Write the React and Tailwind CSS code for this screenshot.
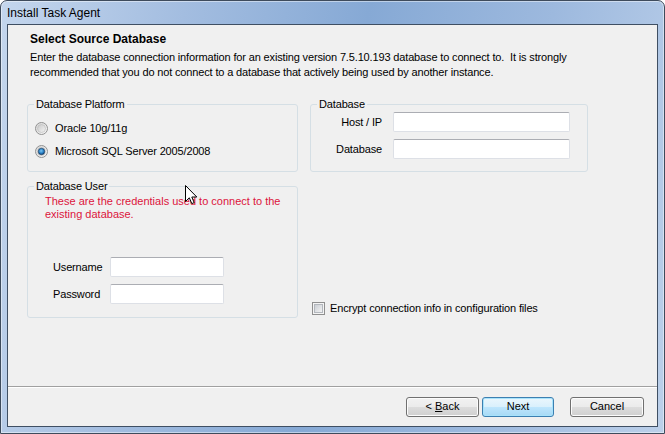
import React from 'react';

const FONT = { fontFamily: '"Liberation Sans", Arial, sans-serif' };

function Radio({ checked }) {
  return (
    <svg width="13" height="13" viewBox="0 0 13 13" className="shrink-0">
      <defs>
        <linearGradient id="rg-ring" x1="0" y1="0" x2="1" y2="1">
          <stop offset="0" stopColor="#d6d6d6" />
          <stop offset="1" stopColor="#f8f8f8" />
        </linearGradient>
        <linearGradient id="rg-in" x1="0" y1="0" x2="1" y2="1">
          <stop offset="0" stopColor="#c9c9c9" />
          <stop offset="1" stopColor="#f4f4f4" />
        </linearGradient>
        <radialGradient id="rg-dot" cx="0.45" cy="0.4" r="0.6">
          <stop offset="0" stopColor="#7cc6f2" />
          <stop offset="0.6" stopColor="#2a82c8" />
          <stop offset="1" stopColor="#0d3f73" />
        </radialGradient>
      </defs>
      <circle cx="6.5" cy="6.5" r="6" fill="url(#rg-ring)" stroke="#929292" />
      <circle cx="6.5" cy="6.5" r="4" fill="url(#rg-in)" stroke="#b9b9b9" strokeWidth="0.6" />
      {checked && <circle cx="6.5" cy="6.5" r="3.2" fill="url(#rg-dot)" stroke="#1a3d60" strokeWidth="0.6" />}
    </svg>
  );
}

function Checkbox() {
  return (
    <svg width="13" height="13" viewBox="0 0 13 13" className="shrink-0">
      <defs>
        <linearGradient id="cb-in" x1="0" y1="0" x2="1" y2="1">
          <stop offset="0" stopColor="#c8ccd2" />
          <stop offset="1" stopColor="#f5f5f5" />
        </linearGradient>
      </defs>
      <rect x="0.5" y="0.5" width="12" height="12" fill="#f4f4f4" stroke="#8f8f8f" />
      <rect x="2.5" y="2.5" width="8" height="8" fill="url(#cb-in)" stroke="#b3b7bd" />
    </svg>
  );
}

function TextBox({ className = '' }) {
  return (
    <div className={`h-[20px] bg-white rounded-[2px] border border-[#dde0e6] border-t-[#abadb3] ${className}`} />
  );
}

function Button({ children, primary, className }) {
  const skin = primary
    ? 'border-[#3c7fb1] bg-[linear-gradient(#eaf6fd_0%,#d9f0fc_50%,#bee6fd_50%,#a7d9f5_100%)] shadow-[inset_0_0_0_1px_#a8e3fb]'
    : 'border-[#707070] bg-[linear-gradient(#f2f2f2_0%,#ebebeb_50%,#dddddd_50%,#cfcfcf_100%)] shadow-[inset_0_0_0_1px_#fcfcfc]';
  return (
    <div className={`h-[20px] rounded-[3px] border flex items-center justify-center text-[11px] text-black ${skin} ${className}`}>
      <span className="whitespace-pre">{children}</span>
    </div>
  );
}

export default function App() {
  return (
    <div className="relative w-[665px] h-[434px] overflow-hidden bg-white" style={FONT}>
      <div className="w-full h-full flex flex-col rounded-t-[7px] border border-[#3e4b5c] px-[6px] pb-[6px]
        bg-[linear-gradient(100deg,#c4d6ed_0%,#a3bde0_25%,#86a9d5_50%,#9db9de_75%,#bcd0ea_100%)]
        shadow-[inset_0_0_0_1px_rgba(255,255,255,0.45)]">

        {/* Title bar */}
        <div className="h-[23px] flex items-center text-[12px] text-black pt-[1px]">
          Install Task Agent
        </div>

        {/* Client area */}
        <div className="flex-1 flex flex-col border border-[#3f4f63] bg-[#f0f0f0] tracking-[-0.15px]">
          <div className="flex-1 flex flex-col">

            {/* Header */}
            <div className="pt-[7px] pl-[22px]">
              <div className="text-[12px] leading-[15px] font-bold text-black tracking-normal">Select Source Database</div>
              <p className="mt-[3px] text-[11px] leading-[15px] text-black whitespace-pre-wrap">
                {'Enter the database connection information for an existing version 7.5.10.193 database to connect to.  It is strongly\nrecommended that you do not connect to a database that actively being used by another instance.'}
              </p>
            </div>

            {/* Groups */}
            <div className="mt-[18px] pl-[19px] flex gap-[12px] text-[11px] text-black">

              {/* Left column */}
              <div className="w-[271px] flex flex-col">
                <fieldset className="h-[74px] border border-[#d5dfe5] rounded-[3px] px-0">
                  <legend className="ml-[6px] px-[2px] leading-[13px]">Database Platform</legend>
                  <div className="flex flex-col pl-[7px] pt-[9px] gap-[6px]">
                    <div className="h-[17px] flex items-center gap-[7px]">
                      <Radio />
                      <span>Oracle 10g/11g</span>
                    </div>
                    <div className="h-[17px] flex items-center gap-[7px]">
                      <Radio checked />
                      <span>Microsoft SQL Server 2005/2008</span>
                    </div>
                  </div>
                </fieldset>

                <fieldset className="mt-[8px] h-[138px] border border-[#d5dfe5] rounded-[3px] px-0">
                  <legend className="ml-[6px] px-[2px] leading-[13px]">Database User</legend>
                  <p className="pl-[17px] pt-[2px] leading-[13px] text-[#dc143c] tracking-normal">
                    These are the credentials used to connect to the<br />existing database.
                  </p>
                  <div className="mt-[36px] pl-[25px] grid grid-cols-[57px_114px] gap-y-[7px] items-center">
                    <span>Username</span>
                    <TextBox />
                    <span>Password</span>
                    <TextBox />
                  </div>
                </fieldset>
              </div>

              {/* Right column */}
              <div className="w-[278px] flex flex-col">
                <fieldset className="h-[74px] border border-[#d5dfe5] rounded-[3px] px-0">
                  <legend className="ml-[6px] px-[2px] leading-[13px]">Database</legend>
                  <div className="pt-[1px] grid grid-cols-[71px_177px] gap-x-[11px] gap-y-[7px] items-center">
                    <span className="text-right">Host / IP</span>
                    <TextBox />
                    <span className="text-right">Database</span>
                    <TextBox />
                  </div>
                </fieldset>

                <div className="mt-[129px] h-[15px] pl-[2px] flex items-center gap-[5px]">
                  <Checkbox />
                  <span>Encrypt connection info in configuration files</span>
                </div>
              </div>
            </div>
          </div>

          {/* Separator */}
          <div className="h-[2px] border-t border-[#a0a0a0] border-b border-b-white" />

          {/* Footer buttons */}
          <div className="h-[38px] flex items-center justify-end pr-[13px] pb-[1px] tracking-normal">
            <Button className="w-[73px]">
              {'< '}<span className="underline">B</span>{'ack'}
            </Button>
            <Button primary className="ml-[3px] w-[72px]">Next</Button>
            <Button className="ml-[16px] w-[74px]">Cancel</Button>
          </div>
        </div>
      </div>

      {/* Mouse pointer */}
      <svg className="absolute left-[185px] top-[185px]" width="13" height="20" viewBox="0 0 13 20">
        <path d="M0.5 0.5 L0.5 16.5 L4.3 12.8 L6.8 18.6 L9.2 17.6 L6.8 12 L11.8 12 Z"
          fill="#fff" stroke="#000" strokeWidth="1" strokeLinejoin="miter" />
      </svg>
    </div>
  );
}
